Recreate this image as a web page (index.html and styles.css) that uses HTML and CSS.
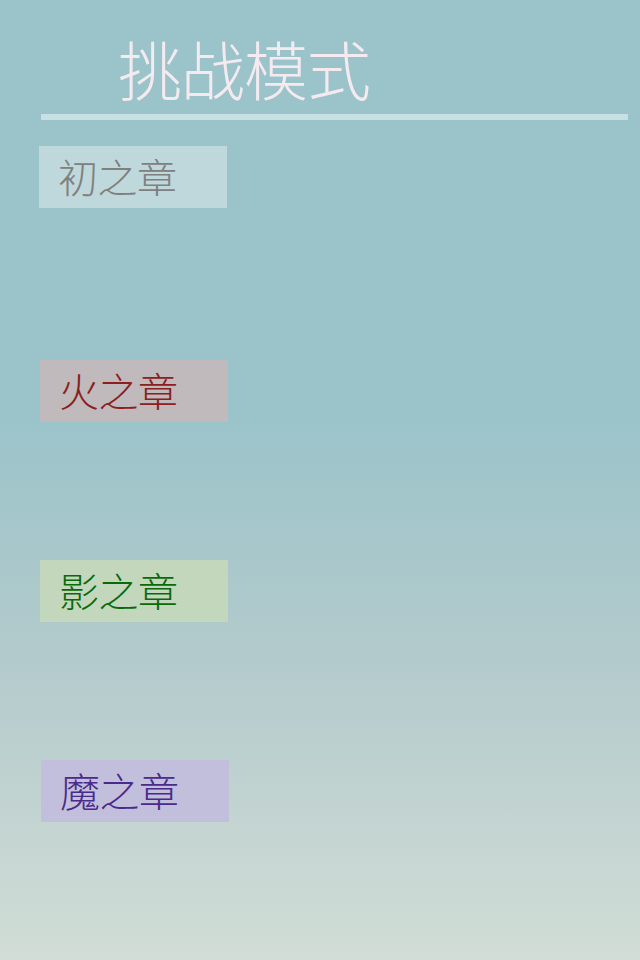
FILE: index.html
```html
<!DOCTYPE html>
<html lang="zh-CN">
<head>
<meta charset="utf-8">
<title>挑战模式</title>
<link rel="stylesheet" href="styles.css">
</head>
<body>
<main class="screen">
  <header class="header">
    <h1 class="title">挑战模式</h1>
    <div class="rule"></div>
  </header>
  <nav class="chapters">
    <a class="chapter chapter-first">初之章</a>
    <a class="chapter chapter-fire">火之章</a>
    <a class="chapter chapter-shadow">影之章</a>
    <a class="chapter chapter-magic">魔之章</a>
  </nav>
</main>
</body>
</html>
```
FILE: styles.css
```css
html, body {
  margin: 0;
  padding: 0;
}
body {
  width: 640px;
  height: 960px;
  overflow: hidden;
  background: linear-gradient(to bottom, #9ac4ca 0px, #9bc4ca 420px, #b3cacc 660px, #d1ddd6 960px);
  font-family: "Noto Sans CJK SC", "Noto Sans", sans-serif;
}
.screen {
  display: flex;
  flex-direction: column;
}
.header {
  padding-top: 29px;
}
.title {
  margin: 0 0 0 118px;
  font-size: 64px;
  font-weight: 300;
  line-height: 76px;
  color: #f4eaf0;
  letter-spacing: -1px;
}
.rule {
  margin: 9px 0 0 41px;
  width: 587px;
  height: 6px;
  background: #c8dfe3;
}
.chapters {
  display: flex;
  flex-direction: column;
  align-items: flex-start;
  padding-top: 26px;
}
.chapter {
  display: flex;
  align-items: center;
  box-sizing: border-box;
  width: 188px;
  height: 62px;
  padding-left: 19px;
  padding-bottom: 3px;
  font-size: 40px;
  font-weight: 300;
  letter-spacing: -0.5px;
  text-decoration: none;
}
.chapter-first {
  margin-left: 39px;
  background: #bfd8dc;
  color: #808080;
}
.chapter-fire {
  margin-left: 40px;
  margin-top: 152px;
  background: #c0babd;
  color: #8b2020;
}
.chapter-shadow {
  margin-left: 40px;
  margin-top: 138px;
  background: #c3d7bc;
  color: #0a6a0a;
}
.chapter-magic {
  margin-left: 41px;
  margin-top: 138px;
  background: #c1bfdc;
  color: #4a2a8a;
}
```
